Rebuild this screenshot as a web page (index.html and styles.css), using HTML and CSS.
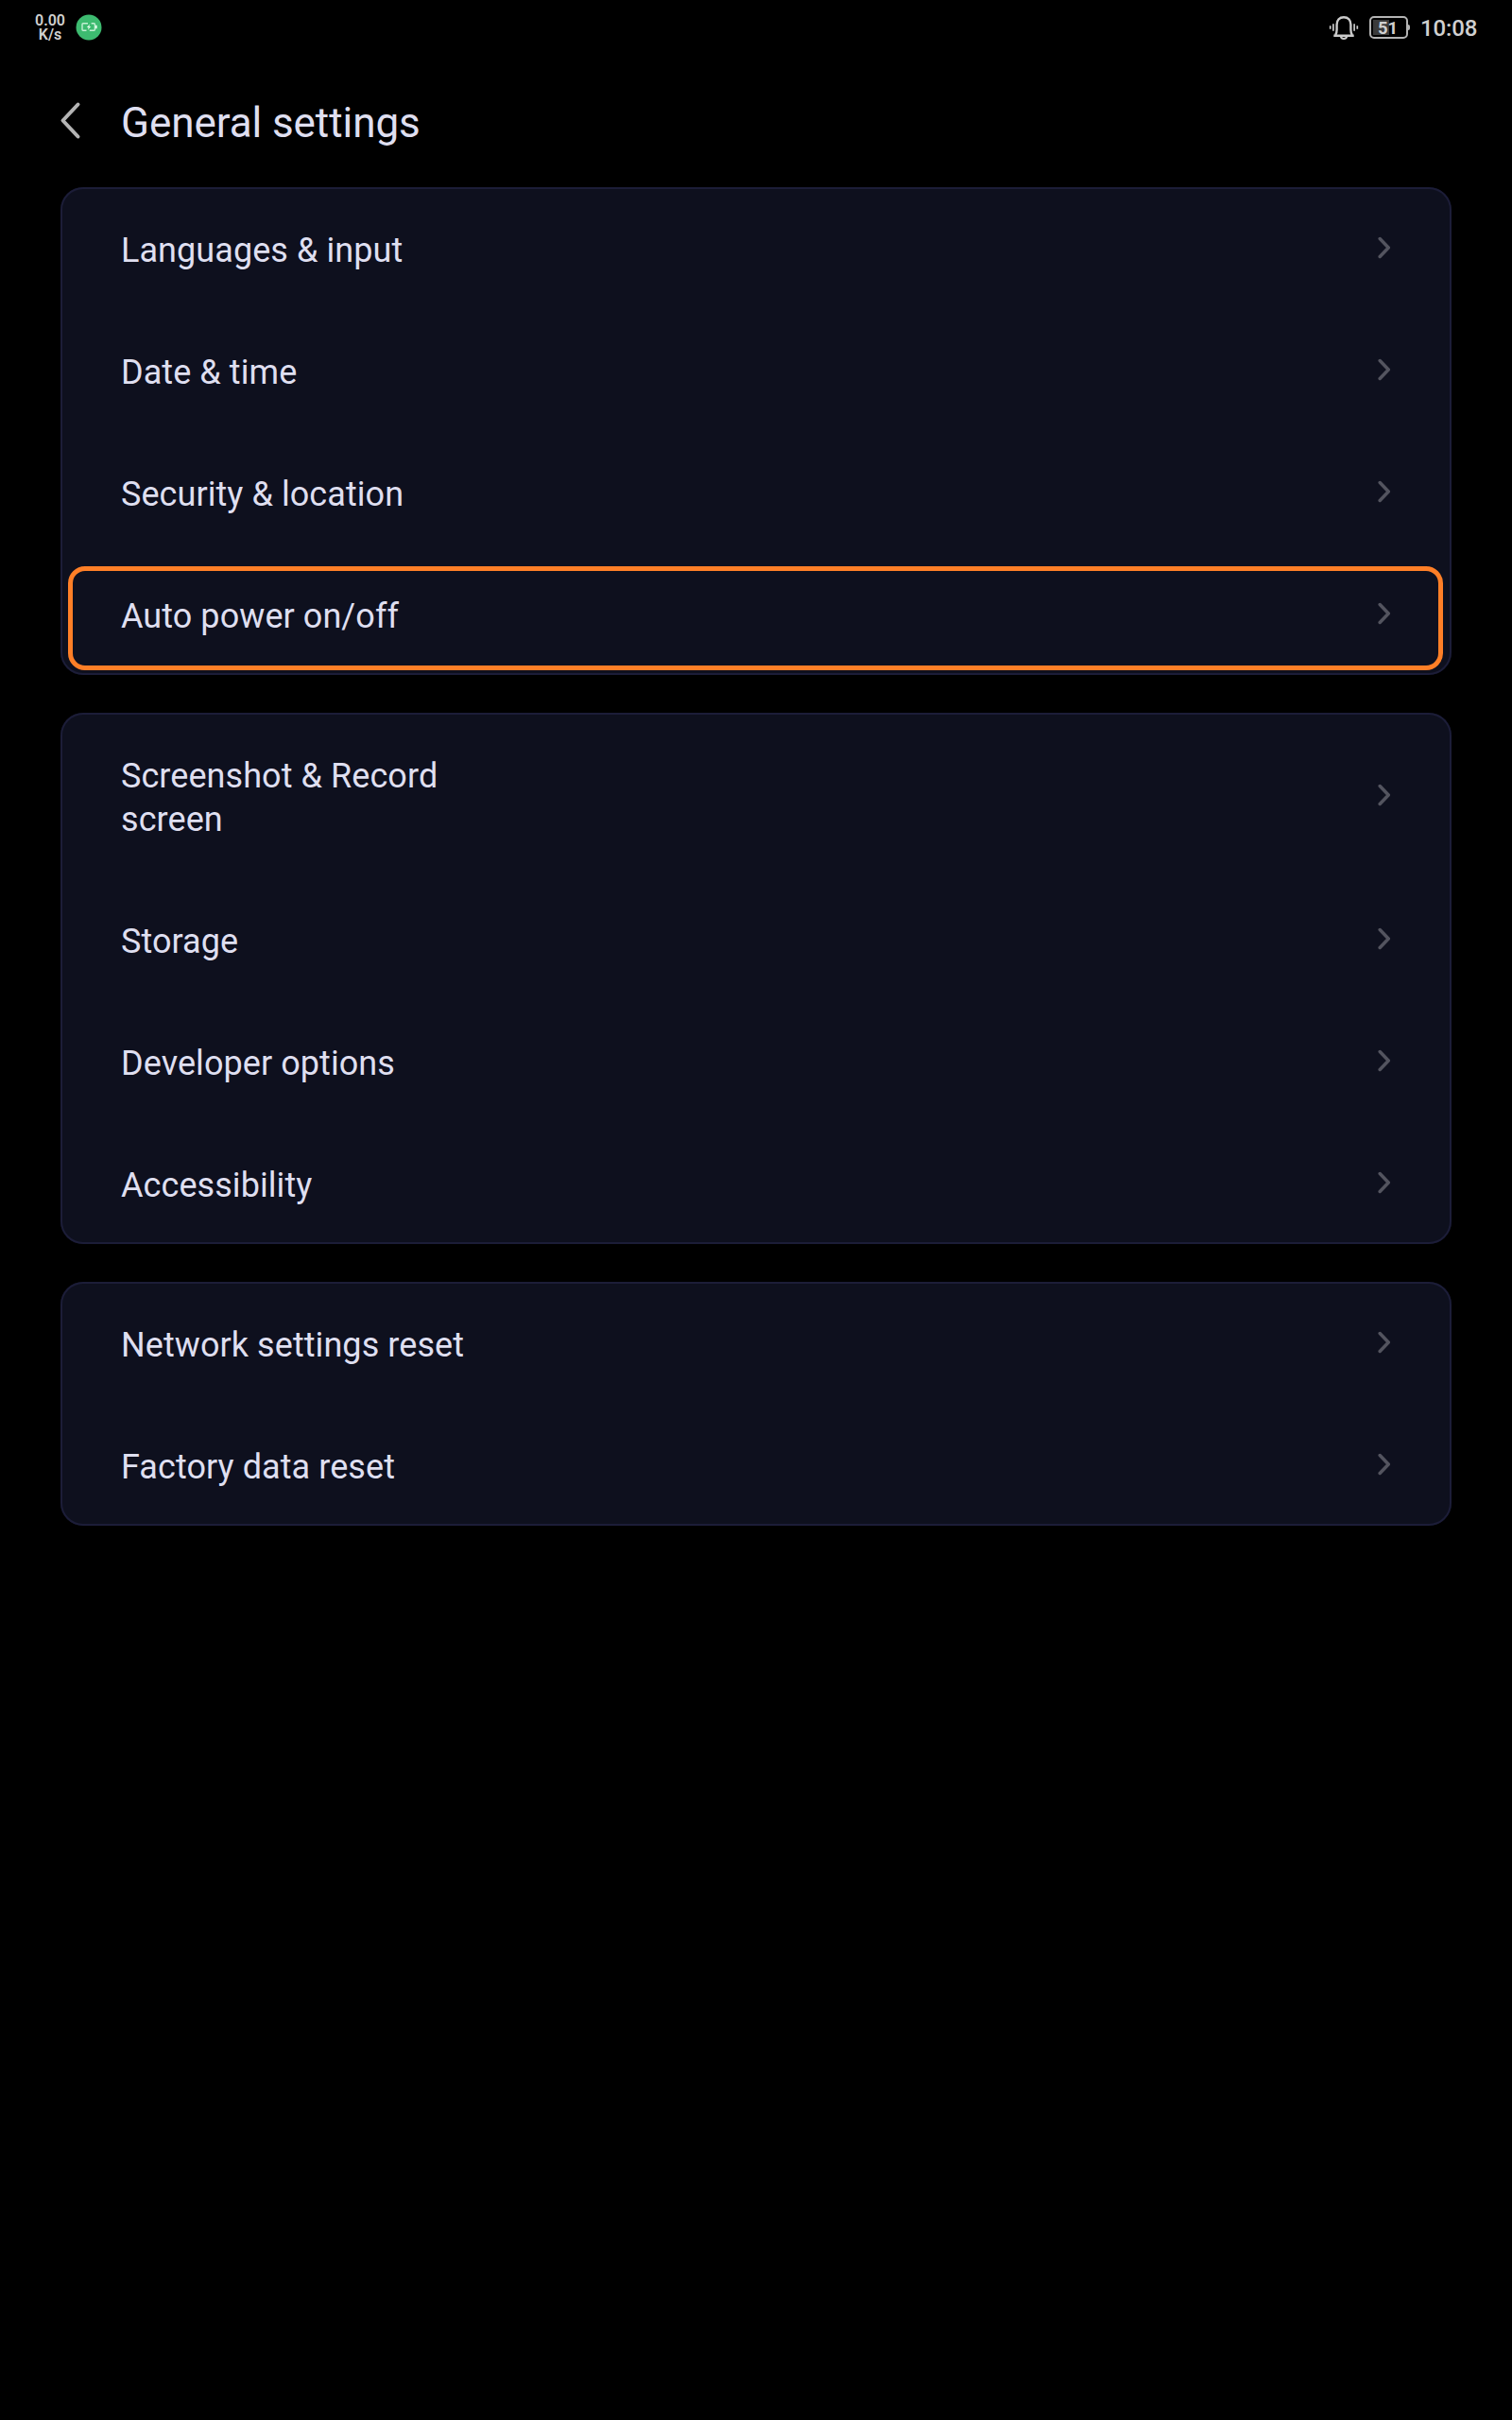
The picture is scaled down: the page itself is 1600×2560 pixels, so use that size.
FILE: index.html
```html
<!DOCTYPE html>
<html lang="en">
<head>
<meta charset="utf-8">
<title>General settings</title>
<link rel="stylesheet" href="styles.css">
</head>
<body>
<svg class="defs" width="0" height="0" aria-hidden="true">
  <symbol id="chevron" viewBox="0 0 14 24"><path d="M2.2 2.5 11.3 12 2.2 21.5"/></symbol>
</svg>
<header class="status">
  <div class="speed"><span>0.00</span><span>K/s</span></div>
  <svg class="charge" width="28" height="28" viewBox="0 0 28 28">
    <circle cx="14" cy="14" r="13.5" fill="#3dbb70"/>
    <path d="M13 9.7H8Q7 9.7 7 10.7V16.2Q7 17.2 8 17.2H11.5M16.6 9.7H19.4Q20.4 9.7 20.4 10.7V16.2Q20.4 17.2 19.4 17.2H14.8" fill="none" stroke="#c4f0d4" stroke-width="1.4"/>
    <path d="M21 11.7H22.7V15.3H21ZM15 10.4 11.8 13.9H13.6L12.9 16.8 16.2 13H14.4Z" fill="#e2faea"/>
  </svg>
  <svg class="bell" width="34" height="28" viewBox="0 0 34 28">
    <g fill="none" stroke="#cbcbcb" stroke-width="2.4">
      <path d="M6.3 21.7H27.7M8.2 21Q9.6 19 9.6 15.6V10C9.6 5.2 12.5 2.2 17 2.2S24.4 5.2 24.4 10V15.6Q24.4 19 25.8 21"/>
      <path d="M13.8 22.5Q14.4 25 17 25T20.2 22.5" stroke-width="2"/>
      <path d="M5.9 9.3V16.7M2.7 11.3V14.7M28.1 9.3V16.7M31.3 11.3V14.7" stroke-width="1.7"/>
    </g>
  </svg>
  <div class="battery">51</div>
  <time class="clock">10:08</time>
</header>
<div class="titlebar">
  <svg class="back" width="24" height="42" viewBox="0 0 24 42"><path d="M19.5 3.5 3.5 20.5 19.5 37.5"/></svg>
  <h1>General settings</h1>
</div>
<main class="cards">
  <section class="card">
    <a class="row"><span>Languages &amp; input</span><svg class="chev"><use href="#chevron"/></svg></a>
    <a class="row"><span>Date &amp; time</span><svg class="chev"><use href="#chevron"/></svg></a>
    <a class="row"><span>Security &amp; location</span><svg class="chev"><use href="#chevron"/></svg></a>
    <a class="row marked"><span>Auto power on/off</span><svg class="chev"><use href="#chevron"/></svg></a>
  </section>
  <section class="card">
    <a class="row"><span>Screenshot &amp; Record screen</span><svg class="chev"><use href="#chevron"/></svg></a>
    <a class="row"><span>Storage</span><svg class="chev"><use href="#chevron"/></svg></a>
    <a class="row"><span>Developer options</span><svg class="chev"><use href="#chevron"/></svg></a>
    <a class="row"><span>Accessibility</span><svg class="chev"><use href="#chevron"/></svg></a>
  </section>
  <section class="card">
    <a class="row"><span>Network settings reset</span><svg class="chev"><use href="#chevron"/></svg></a>
    <a class="row"><span>Factory data reset</span><svg class="chev"><use href="#chevron"/></svg></a>
  </section>
</main>
</body>
</html>
```
FILE: styles.css
```css
* { box-sizing: border-box; }
html { background: #000; }
body {
  margin: 0;
  min-height: 2560px;
  background: #000;
  color: #dfdff0;
  font-family: Roboto, "Liberation Sans", sans-serif;
}
.defs { display: none; }

.status {
  display: flex;
  height: 60px;
  padding: 0 36px 0 37px;
  color: #d0d0d0;
}
.speed {
  display: flex;
  flex-direction: column;
  width: 32px;
  padding-top: 14px;
  font-size: 16px;
  font-weight: 600;
  line-height: 15px;
  text-align: center;
}
.charge { margin: 15px auto 0 11px; }
.bell { margin: 16px 10px 0 0; }
.battery {
  position: relative;
  width: 41px;
  height: 24px;
  margin: 17px 13px 0 0;
  padding-right: 2px;
  border: 2px solid #b4b4b4;
  border-radius: 5px;
  background: linear-gradient(#3a3a3a, #3a3a3a) 2px 2px / 17px 16px no-repeat;
  font-size: 18.5px;
  font-weight: 700;
  line-height: 22px;
  text-align: center;
}
.battery::after {
  content: "";
  position: absolute;
  top: 7px;
  right: -4px;
  width: 2px;
  height: 6px;
  border-radius: 0 2px 2px 0;
  background: #b4b4b4;
}
.clock {
  width: 61px;
  padding-top: 15px;
  font-size: 24px;
  font-weight: 500;
  line-height: 30px;
  letter-spacing: -0.1px;
}

.titlebar {
  display: flex;
  height: 138px;
  padding: 0 63px;
}
.back { margin: 47px 41px 0 0; }
.back path {
  fill: none;
  stroke: #b4b4b4;
  stroke-width: 4;
  stroke-linecap: round;
  stroke-linejoin: round;
}
h1 {
  margin: 44px 0 0;
  font-size: 44px;
  font-weight: 400;
  line-height: 52px;
  letter-spacing: -0.07px;
}

.cards {
  display: flex;
  flex-direction: column;
  gap: 40px;
  padding: 0 64px;
}
.card {
  border-radius: 24px;
  background: #0e101e;
  box-shadow: inset 0 0 0 2px #1c1d38;
}
.row {
  position: relative;
  display: flex;
  align-items: center;
  justify-content: space-between;
  padding: 0 64px;
}
.row span {
  width: 380px;
  padding: 44px 0 39px;
  font-size: 36px;
  line-height: 46px;
  letter-spacing: 0.07px;
}
.chev {
  width: 14px;
  height: 24px;
  margin-bottom: 2px;
  fill: none;
  stroke: #53545f;
  stroke-width: 3.5;
  stroke-linecap: round;
  stroke-linejoin: round;
}
.marked::after {
  content: "";
  position: absolute;
  inset: 14px 9px 5px 8px;
  border: 5px solid #ff7f27;
  border-radius: 18px;
}
```
